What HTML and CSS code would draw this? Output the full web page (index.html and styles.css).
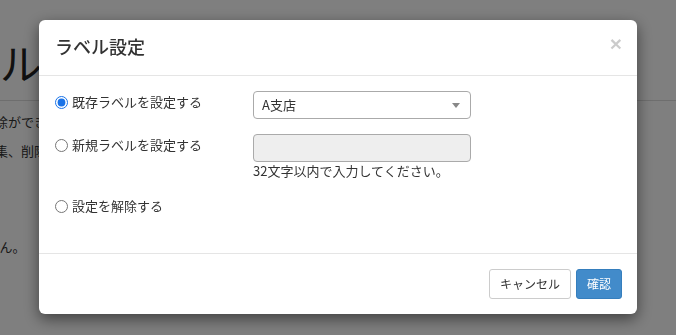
FILE: index.html
```html
<!DOCTYPE html>
<html lang="ja">
<head>
<meta charset="UTF-8">
<meta name="viewport" content="width=device-width, initial-scale=1.0">
<title>ラベル設定</title>
<link rel="stylesheet" href="styles.css">
</head>
<body>
  <!-- page behind the dialog -->
  <div class="page">
    <h1 class="page-title">ラベル管理</h1>
    <div class="page-rule"></div>
    <p class="page-text line-1">削除ができます。</p>
    <p class="page-text line-2">編集、削除を行えます。</p>
    <p class="page-text line-3">ありません。</p>
  </div>

  <div class="modal-backdrop"></div>
  <div class="modal">
    <div class="modal-dialog">
      <div class="modal-header">
        <h4 class="modal-title">ラベル設定</h4>
        <button class="close" type="button">&times;</button>
      </div>
      <div class="modal-body">
        <div class="form-row">
          <label class="radio-label">
            <input type="radio" name="label-mode" checked>
            既存ラベルを設定する
          </label>
          <div class="control">
            <div class="select-box">
              <span>A支店</span>
              <span class="select-arrow"></span>
            </div>
          </div>
        </div>
        <div class="form-row">
          <label class="radio-label">
            <input type="radio" name="label-mode">
            新規ラベルを設定する
          </label>
          <div class="control">
            <input type="text" class="text-input" disabled>
            <p class="help-text">32文字以内で入力してください。</p>
          </div>
        </div>
        <div class="form-row last">
          <label class="radio-label">
            <input type="radio" name="label-mode">
            設定を解除する
          </label>
        </div>
      </div>
      <div class="modal-footer">
        <button class="btn btn-default" type="button">キャンセル</button>
        <button class="btn btn-primary" type="button">確認</button>
      </div>
    </div>
  </div>
</body>
</html>
```

FILE: styles.css
```css
body {
  font-family: "Noto Sans CJK JP", "Noto Sans", sans-serif;
  font-size: 13px;
  color: #333;
  background: #fff;
  margin: 0;
  overflow: hidden;
}
.page {
  padding-top: 32px;
}
.page-title {
  font-size: 42px;
  font-weight: normal;
  line-height: 60px;
  margin: 0 0 8px -84px;
  color: #222;
}
.page-rule {
  border-top: 1px solid #ddd;
}
.page-text {
  margin: 0;
  line-height: 20px;
}
.line-1 {
  margin: 11px 0 0 -18px;
}
.line-2 {
  margin: 9px 0 0 -18px;
}
.line-3 {
  margin: 76px 0 0 -52px;
}
.modal-backdrop {
  position: fixed;
  top: 0;
  left: 0;
  right: 0;
  bottom: 0;
  background: rgba(0, 0, 0, 0.5);
}
.modal {
  position: fixed;
  top: 0;
  left: 0;
  right: 0;
  bottom: 0;
}
.modal-dialog {
  width: 598px;
  margin: 20px auto 0;
  background: #fff;
  border-radius: 6px;
  box-shadow: 0 5px 15px rgba(0, 0, 0, 0.5);
}
.modal-header {
  display: flex;
  justify-content: space-between;
  align-items: center;
  height: 56px;
  padding: 0 15px 0 16px;
  border-bottom: 1px solid #e5e5e5;
  box-sizing: border-box;
}
.modal-title {
  margin: 0 0 4px;
  font-size: 18px;
  font-weight: 500;
  line-height: 26px;
  color: #333;
}
.close {
  font-family: "Liberation Sans", Arial, sans-serif;
  font-size: 21px;
  font-weight: bold;
  line-height: 1;
  color: #000;
  opacity: 0.2;
  background: none;
  border: 0;
  padding: 0;
  margin: 0 0 8px;
  cursor: pointer;
}
.modal-body {
  padding: 15px 15px 0 16px;
  height: 177px;
  box-sizing: border-box;
}
.form-row {
  display: flex;
  margin-bottom: 15px;
}
.form-row.last {
  margin-top: 2px;
}
.radio-label {
  display: flex;
  align-items: center;
  width: 198px;
  height: 18px;
  margin-top: 2px;
  line-height: 18px;
}
.radio-label input {
  width: 13px;
  height: 13px;
  margin: 0 4px 0 0;
  accent-color: #1a73e8;
}
.control {
  width: 218px;
}
.select-box {
  display: flex;
  justify-content: space-between;
  align-items: center;
  height: 28px;
  padding: 0 8px 0 8px;
  border: 1px solid #aaa;
  border-radius: 4px;
  box-sizing: border-box;
  line-height: 26px;
}
.select-arrow {
  width: 0;
  height: 0;
  border-left: 4px solid transparent;
  border-right: 4px solid transparent;
  border-top: 5px solid #888;
  margin-right: 2px;
}
.text-input {
  display: block;
  width: 100%;
  height: 28px;
  margin: 0;
  border: 1px solid #aaa;
  border-radius: 4px;
  background: #eee;
  box-sizing: border-box;
}
.help-text {
  margin: 0;
  line-height: 18px;
  color: #333;
}
.modal-footer {
  display: flex;
  justify-content: flex-end;
  gap: 5px;
  padding: 15px 15px 15px;
  border-top: 1px solid #e5e5e5;
}
.btn {
  font-family: "Noto Sans CJK JP", "Noto Sans", sans-serif;
  font-size: 12px;
  height: 30px;
  padding: 0 10px;
  border-radius: 3px;
  border: 1px solid transparent;
  line-height: 28px;
  cursor: pointer;
}
.btn-default {
  background: #fff;
  border-color: #ccc;
  color: #333;
}
.btn-primary {
  background: #428bca;
  border-color: #357ebd;
  color: #fff;
}
```
